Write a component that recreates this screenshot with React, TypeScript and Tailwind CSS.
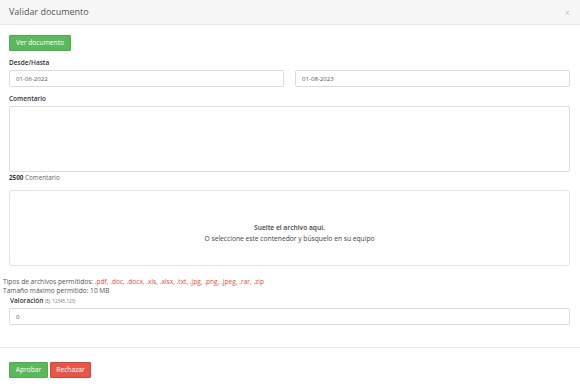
import React from "react";

export default function App() {
  return (
    <div
      className="w-[580px] h-[392px] bg-white text-[#555] overflow-hidden"
      style={{ fontFamily: '"Open Sans", "Liberation Sans", sans-serif' }}
    >
      <div className="h-[25px] bg-[#f7f7f7] border-b border-[#e8e8e8] flex items-center justify-between pl-[9px] pr-[10px]">
        <span className="text-[9px] text-[#555]">Validar documento</span>
        <span className="text-[9px] leading-none text-[#c8c8c8]">×</span>
      </div>

      <div className="px-[9px] pr-[10px]">
        <button className="mt-[10px] h-[16px] px-[6px] bg-[#5cb85c] border border-[#4cae4c] rounded-[1px] text-white text-[6.7px] leading-none flex items-center">
          Ver documento
        </button>

        <div className="mt-[7px] text-[6.5px] leading-[10px] font-semibold text-[#333]">Desde/Hasta</div>
        <div className="mt-[2px] flex gap-[11px]">
          <div className="flex-1 h-[17px] border border-[#dcdcdc] rounded-[2px] flex items-center px-[6px] text-[6.1px] text-[#555]">
            01-06-2022
          </div>
          <div className="flex-1 h-[17px] border border-[#dcdcdc] rounded-[2px] flex items-center px-[6px] text-[6.1px] text-[#555]">
            01-08-2023
          </div>
        </div>

        <div className="mt-[7px] text-[6.5px] leading-[10px] font-semibold text-[#333]">Comentario</div>
        <div className="mt-[2px] h-[66px] border border-[#dcdcdc] rounded-[2px]"></div>
        <div className="mt-[1px] text-[6.3px] leading-[10px] text-[#666]">
          <span className="font-bold text-[#333]">2500</span> Comentario
        </div>

        <div className="mt-[7px] h-[76px] border border-[#e3e3e3] rounded-[3px] flex flex-col items-center justify-center pt-[10px] text-[6.7px] leading-[11px] text-[#444]">
          <div className="font-semibold">Suelte el archivo aquí.</div>
          <div>O seleccione este contenedor y búsquelo en su equipo</div>
        </div>

        <div className="mt-[11px] -ml-[6px] text-[6.6px] leading-[9px] text-[#555]">
          Tipos de archivos permitidos:{" "}
          <span className="text-[#e74c3c]">.pdf, .doc, .docx, .xls, .xlsx, .txt, .jpg, .png, .jpeg, .rar, .zip</span>
        </div>
        <div className="-ml-[6px] text-[6.6px] leading-[9px] text-[#555]">Tamaño máximo permitido: 10 MB</div>
        <div className="mt-[1px] ml-[1px] text-[6.5px] leading-[10px] font-semibold text-[#333]">
          Valoración <span className="font-normal text-[4.5px] text-[#777]">(Ej: 12345.123)</span>
        </div>
        <div className="mt-[2px] h-[17px] border border-[#dcdcdc] rounded-[2px] flex items-center px-[6px] text-[6.1px] text-[#555]">
          0
        </div>
      </div>

      <div className="mt-[22px] border-t border-[#e8e8e8] px-[9px] pt-[14px] flex gap-[2px]">
        <button className="h-[16px] w-[39px] bg-[#5cb85c] border border-[#4cae4c] rounded-[1px] text-white text-[6.7px] leading-none flex items-center justify-center">
          Aprobar
        </button>
        <button className="h-[16px] w-[41px] bg-[#e5574a] border border-[#d64537] rounded-[1px] text-white text-[6.7px] leading-none flex items-center justify-center">
          Rechazar
        </button>
      </div>
    </div>
  );
}
